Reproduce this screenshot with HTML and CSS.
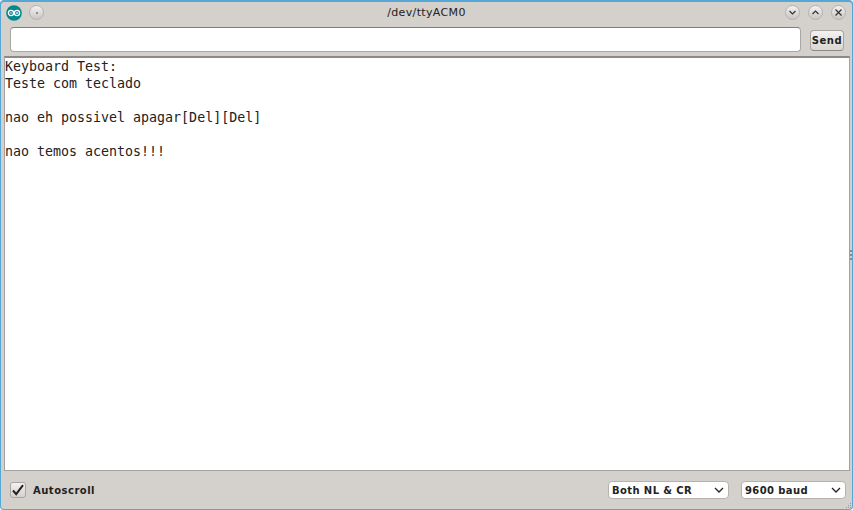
FILE: index.html
```html
<!DOCTYPE html>
<html lang="en">
<head>
<meta charset="utf-8">
<title>/dev/ttyACM0</title>
<link rel="stylesheet" href="styles.css">
</head>
<body>
<div class="window">
  <header class="titlebar">
    <div class="title-left">
      <svg class="logo" width="16" height="16" viewBox="0 0 16 16"><circle cx="8" cy="8" r="7.8" fill="#00878f"/><g fill="none" stroke="#fff" stroke-width="1.3"><circle cx="5" cy="8" r="2.6"/><circle cx="11" cy="8" r="2.6"/></g><path d="M3.9 8h2.2M9.9 8h2.2M11 6.9v2.2" stroke="#fff" stroke-width=".8"/></svg>
      <span class="round-btn"><i class="dot"></i></span>
    </div>
    <div class="title">/dev/ttyACM0</div>
    <div class="title-right">
      <span class="round-btn"><svg width="9" height="9" viewBox="0 0 9 9"><path d="M1.5 3l3 3 3-3" fill="none" stroke="#333" stroke-width="1.2"/></svg></span>
      <span class="round-btn"><svg width="9" height="9" viewBox="0 0 9 9"><path d="M1.5 6l3-3 3 3" fill="none" stroke="#333" stroke-width="1.2"/></svg></span>
      <span class="round-btn"><svg width="9" height="9" viewBox="0 0 9 9"><path d="M1.5 1.5l6 6M7.5 1.5l-6 6" fill="none" stroke="#333" stroke-width="1.2"/></svg></span>
    </div>
  </header>
  <div class="input-row">
    <div class="text-input"></div>
    <button class="send">Send</button>
  </div>
  <pre class="output">Keyboard Test:
Teste com teclado

nao eh possivel apagar[Del][Del]

nao temos acentos!!!</pre>
  <footer class="bottom">
    <div class="autoscroll">
      <span class="check"><svg width="14" height="14" viewBox="0 0 14 14"><path d="M2 7.5l3.2 3.7 6.8-9" fill="none" stroke="#222" stroke-width="2"/></svg></span>
      <span class="label">Autoscroll</span>
    </div>
    <div class="select select-a"><span>Both NL &amp; CR</span><svg width="10" height="6" viewBox="0 0 10 6"><path d="M1 1l4 4 4-4" fill="none" stroke="#222" stroke-width="1.3"/></svg></div>
    <div class="select select-b"><span>9600 baud</span><svg width="10" height="6" viewBox="0 0 10 6"><path d="M1 1l4 4 4-4" fill="none" stroke="#222" stroke-width="1.3"/></svg></div>
  </footer>
  <svg class="side-grip" width="2" height="11" viewBox="0 0 2 11"><path d="M0 0h2v2H0zM0 4h2v2H0zM0 8h2v2H0z" fill="#8c8986"/></svg>
  <svg class="corner-grip" width="6" height="6" viewBox="0 0 6 6"><path d="M4 0h1v1H4zM2 2h1v1H2zM4 2h1v1H4zM0 4h1v1H0zM2 4h1v1H2zM4 4h1v1H4z" fill="#9a9794"/></svg>
</div>
</body>
</html>
```
FILE: styles.css
```css
* { box-sizing: border-box; }
html, body { margin: 0; height: 100%; }
body { width: 853px; height: 510px; overflow: hidden; background: #fff; }
.window {
  width: 853px; height: 510px;
  display: flex; flex-direction: column;
  position: relative;
  background: #d4d0cc;
  border: 1px solid #56a6d6;
  border-top: 0;
  border-radius: 4px;
  box-shadow: inset 0 2px 0 #56a6d6;
  font-family: "DejaVu Sans", sans-serif;
}
.titlebar {
  height: 25px; padding: 0 6px 0 5px;
  display: flex; align-items: center; justify-content: space-between;
  position: relative;
}
.title-left, .title-right { display: flex; align-items: center; }
.title-left { gap: 7px; }
.title-right { gap: 8px; }
.logo { display: block; }
.title { font-size: 11px; letter-spacing: .35px; color: #222; position: absolute; left: 0; right: 0; text-align: center; pointer-events: none; }
.round-btn {
  width: 15px; height: 15px; border-radius: 50%;
  background: linear-gradient(#f4f3f2, #c9c6c3);
  border: 1px solid #b5b2af;
  display: flex; align-items: center; justify-content: center;
}
.dot { width: 2px; height: 2px; border-radius: 50%; background: #777; }
.input-row { display: flex; align-items: flex-start; gap: 9px; padding: 2px 8px 0 9px; height: 30px; }
.text-input {
  flex: 1; height: 25px; background: #fff;
  border: 1px solid #a9a6a3; border-top-color: #807d7a;
  border-radius: 4px;
}
.send {
  width: 34px; height: 21px; padding: 0; margin-top: 3px;
  background: linear-gradient(#f3f2f1, #d9d6d3);
  border: 1px solid #a8a5a2; border-bottom-color: #8c8986;
  border-radius: 4px;
  font: bold 10px "DejaVu Sans", sans-serif;
  letter-spacing: .6px; color: #222;
}
.output {
  flex: 1; margin: 1px 0 0 3px; width: 846px;
  background: #fff; border: 1px solid #a5a19e; border-top: 2px solid #8c8986;
  padding: 0;
  font: 13.3px/17px "DejaVu Sans Mono", monospace; color: #222;
}
.bottom { height: 38px; display: flex; align-items: center; padding: 0 6px 0 9px; }
.autoscroll { display: flex; align-items: center; gap: 7px; margin-right: auto; }
.check {
  width: 16px; height: 16px; border-radius: 3px;
  background: linear-gradient(#f3f2f1, #d4d1ce);
  border: 1px solid #a8a5a2;
  display: flex; align-items: center; justify-content: center;
}
.label { font-size: 10px; font-weight: bold; letter-spacing: .5px; color: #222; }
.select {
  height: 18px; background: #fff;
  border: 1px solid #b5b2af; border-radius: 4px;
  display: flex; align-items: center; justify-content: space-between;
  padding: 0 4px 0 3px;
  font-size: 10px; font-weight: bold; letter-spacing: .4px; color: #222;
}
.select-a { width: 121px; margin-right: 12px; }
.select-b { width: 105px; }
.side-grip { position: absolute; right: 0; top: 250px; }
.corner-grip { position: absolute; right: 0; bottom: 0; }
```
